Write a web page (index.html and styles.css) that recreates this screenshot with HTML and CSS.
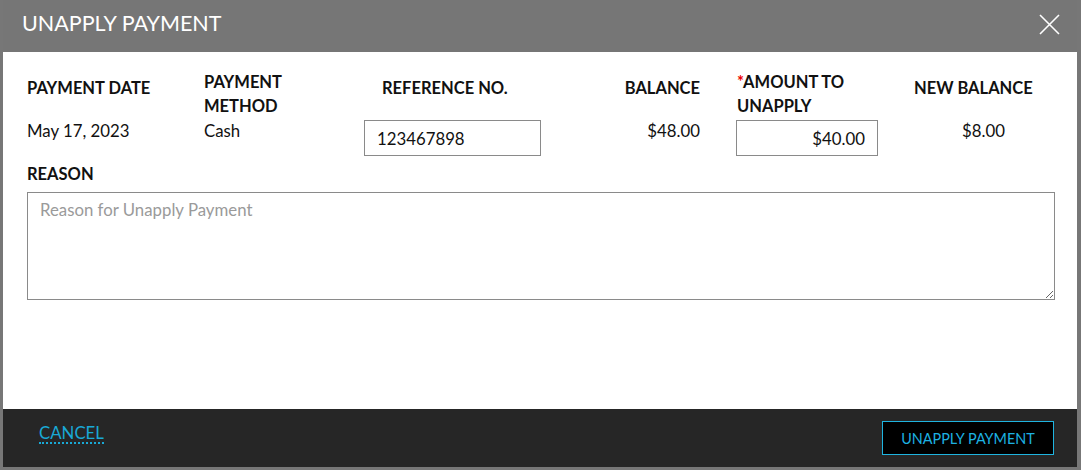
FILE: index.html
```html
<!DOCTYPE html>
<html>
<head>
<meta charset="utf-8">
<link rel="stylesheet" href="styles.css">
</head>
<body>
<div class="modal">
  <div class="modal-header">
    <h1 class="title">UNAPPLY PAYMENT</h1>
    <button class="close" aria-label="Close">
      <svg width="21" height="21" viewBox="0 0 21 21"><path d="M1 1 L20 20 M20 1 L1 20" stroke="#fff" stroke-width="1.6" fill="none"/></svg>
    </button>
  </div>
  <div class="modal-body">
    <div class="grid">
      <div class="lbl one c1">PAYMENT DATE</div>
      <div class="lbl two c2">PAYMENT<br>METHOD</div>
      <div class="lbl one c3">REFERENCE NO.</div>
      <div class="lbl one c4">BALANCE</div>
      <div class="lbl two c5"><span class="req">*</span>AMOUNT TO<br>UNAPPLY</div>
      <div class="lbl one c6">NEW BALANCE</div>

      <div class="val c1">May 17, 2023</div>
      <div class="val c2">Cash</div>
      <div class="val c3"><input class="field ref" type="text" value="123467898"></div>
      <div class="val c4">$48.00</div>
      <div class="val c5"><input class="field amt" type="text" value="$40.00"></div>
      <div class="val c6">$8.00</div>
    </div>
    <div class="lbl reason-lbl">REASON</div>
    <textarea class="reason" placeholder="Reason for Unapply Payment"></textarea>
  </div>
  <div class="modal-footer">
    <a class="cancel" href="#">CANCEL</a>
    <button class="primary">UNAPPLY PAYMENT</button>
  </div>
</div>
</body>
</html>
```

FILE: styles.css
```css
* { box-sizing: border-box; }
html, body { margin: 0; padding: 0; }
body {
  background: #777777;
  font-family: Lato, "Open Sans", "Liberation Sans", sans-serif;
  width: 1081px;
  height: 470px;
  overflow: hidden;
}
.modal {
  margin-left: 3px;
  width: 1074px;
  height: 467px;
  background: #fff;
  display: flex;
  flex-direction: column;
}
.modal-header {
  height: 52px;
  background: #767676;
  display: flex;
  align-items: center;
  justify-content: space-between;
  padding: 0 19px 0 19px;
}
.title {
  margin: 0 0 6px 0;
  color: #fff;
  font-size: 21.5px;
  font-weight: 400;
}
.close {
  background: none;
  border: 0;
  padding: 0;
  width: 21px;
  height: 21px;
  display: block;
  margin: 0 -2px 4px 0;
}
.close svg { display: block; }
.modal-body {
  flex: 1;
  padding: 20px 22px 0 24px;
}
.grid {
  display: grid;
  grid-template-columns: 177px 160px 196px 140px 210px 145px;
  grid-template-rows: 44px auto;
}
.lbl {
  font-weight: 700;
  font-size: 16.5px;
  line-height: 24px;
  color: #111;
}
.lbl.two { margin-top: -2px; }
.lbl.one { margin-top: 5px; line-height: 23px; }
.c3.lbl { padding-left: 18px; }
.c4 { text-align: right; }
.c5 { padding-left: 36px; }
.c5.lbl { padding-left: 37px; }
.c6.lbl { padding-left: 4px; }
.req { color: #e00; }
.val {
  font-size: 16.8px;
  color: #111;
  padding-top: 4px;
  line-height: 22px;
}
.val.c6 { padding-left: 52px; }
.field {
  font-family: inherit;
  font-size: 16.8px;
  color: #111;
  height: 36px;
  border: 1px solid #8a8a8a;
  padding: 0 12px;
  outline: none;
  background: #fff;
  display: block;
}
.ref { width: 177px; }
.amt { width: 142px; text-align: right; }
.reason-lbl {
  margin-top: 7px;
  line-height: 22px;
}
.reason {
  display: block;
  margin-top: 7px;
  width: 1028px;
  height: 108px;
  border: 1px solid #8a8a8a;
  font-family: inherit;
  font-size: 16.8px;
  padding: 6px 12px;
  resize: vertical;
  outline: none;
}
.reason::placeholder { color: #9a9a9a; }
.modal-footer {
  height: 58px;
  background: #262626;
  display: flex;
  align-items: center;
  justify-content: space-between;
  padding: 0 23px 0 36px;
}
.cancel {
  color: #19a9d6;
  font-size: 16.8px;
  text-decoration: none;
  border-bottom: 2px dotted #19a9d6;
  line-height: 19px;
  margin-top: -10px;
}
.primary {
  background: #000;
  color: #1db2e2;
  border: 1px solid #1fb4e0;
  font-family: inherit;
  font-size: 14.4px;
  width: 172px;
  height: 34px;
  padding: 0;
}
```
